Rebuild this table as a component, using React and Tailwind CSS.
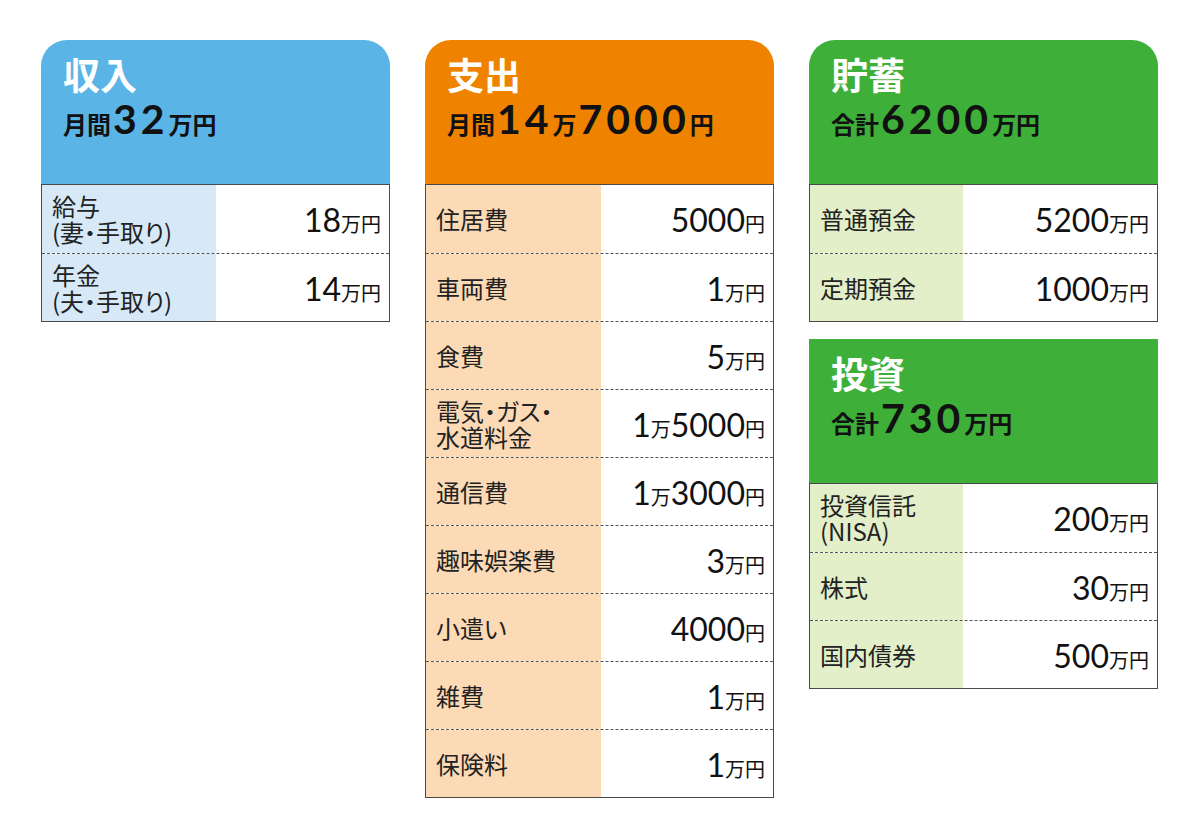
const FONT = { fontFamily: '"Noto Sans CJK JP", "Noto Sans", sans-serif' };
const NUM = { fontFamily: 'Lato, "Noto Sans CJK JP", sans-serif' };

const cards = [
  {
    title: "収入",
    prefix: "月間",
    total: [["32", "big"], ["万円", "small"]],
    head: "bg-[#5bb4e6] rounded-t-[26px]",
    cell: "bg-[#d7e9f7]",
    labelW: "w-[174px]",
    rows: [
      { label: ["給与", "(妻・手取り)"], value: [["18", "n"], ["万円", "u"]] },
      { label: ["年金", "(夫・手取り)"], value: [["14", "n"], ["万円", "u"]] },
    ],
  },
  {
    title: "支出",
    prefix: "月間",
    total: [["14", "big"], ["万", "small"], ["7000", "big"], ["円", "small"]],
    head: "bg-[#ef8300] rounded-t-[26px]",
    cell: "bg-[#fcdab6]",
    labelW: "w-[175px]",
    rows: [
      { label: ["住居費"], value: [["5000", "n"], ["円", "u"]] },
      { label: ["車両費"], value: [["1", "n"], ["万円", "u"]] },
      { label: ["食費"], value: [["5", "n"], ["万円", "u"]] },
      { label: ["電気・ガス・", "水道料金"], value: [["1", "n"], ["万", "u"], ["5000", "n"], ["円", "u"]] },
      { label: ["通信費"], value: [["1", "n"], ["万", "u"], ["3000", "n"], ["円", "u"]] },
      { label: ["趣味娯楽費"], value: [["3", "n"], ["万円", "u"]] },
      { label: ["小遣い"], value: [["4000", "n"], ["円", "u"]] },
      { label: ["雑費"], value: [["1", "n"], ["万円", "u"]] },
      { label: ["保険料"], value: [["1", "n"], ["万円", "u"]] },
    ],
  },
];

const savings = {
  title: "貯蓄",
  prefix: "合計",
  total: [["6200", "big"], ["万円", "small"]],
  head: "bg-[#3eaf38] rounded-t-[26px]",
  cell: "bg-[#e2efc9]",
  labelW: "w-[153px]",
  rows: [
    { label: ["普通預金"], value: [["5200", "n"], ["万円", "u"]] },
    { label: ["定期預金"], value: [["1000", "n"], ["万円", "u"]] },
  ],
};

const invest = {
  title: "投資",
  prefix: "合計",
  total: [["730", "big"], ["万円", "small"]],
  head: "bg-[#3eaf38]",
  cell: "bg-[#e2efc9]",
  labelW: "w-[153px]",
  rows: [
    { label: ["投資信託", "(NISA)"], value: [["200", "n"], ["万円", "u"]] },
    { label: ["株式"], value: [["30", "n"], ["万円", "u"]] },
    { label: ["国内債券"], value: [["500", "n"], ["万円", "u"]] },
  ],
};

function Card({ card }) {
  return (
    <div className="w-[349px]">
      <div className={`h-[144px] px-[22px] pt-[10px] ${card.head}`}>
        <div className="text-[37px] font-bold leading-[48px] text-white">{card.title}</div>
        <div className="flex items-baseline leading-none text-[#111]">
          <span className="text-[24px] font-bold">{card.prefix}</span>
          {card.total.map(([t, k], i) =>
            k === "big" ? (
              <span key={i} className="pl-[2px] text-[41px] font-bold tracking-[4px]" style={NUM}>{t}</span>
            ) : (
              <span key={i} className="text-[24px] font-bold">{t}</span>
            )
          )}
        </div>
      </div>
      <div className="border border-[#4a4a4a] bg-white">
        {card.rows.map((r, i) => (
          <div
            key={i}
            className={`flex h-[68px] ${i > 0 ? "border-t border-dashed border-[#555]" : ""}`}
          >
            <div className={`${card.labelW} ${card.cell} flex flex-col justify-center pl-[10px] text-[24px] leading-[26px] text-[#222] [font-feature-settings:'palt']`}>
              {r.label.map((l, j) => (
                <div key={j}>{l}</div>
              ))}
            </div>
            <div className="flex flex-1 items-baseline justify-end pr-[8px] pt-[19px] text-[#111]">
              {r.value.map(([t, k], j) =>
                k === "n" ? (
                  <span key={j} className="text-[32px] leading-none" style={NUM}>{t}</span>
                ) : (
                  <span key={j} className="text-[20px] leading-none">{t}</span>
                )
              )}
            </div>
          </div>
        ))}
      </div>
    </div>
  );
}

export default function App() {
  return (
    <main className="h-[840px] w-[1200px] bg-white pl-[41px] pt-[40px]" style={FONT}>
      <div className="flex items-start gap-[35px]">
        <Card card={cards[0]} />
        <Card card={cards[1]} />
        <div className="flex flex-col gap-[17px]">
          <Card card={savings} />
          <Card card={invest} />
        </div>
      </div>
    </main>
  );
}
